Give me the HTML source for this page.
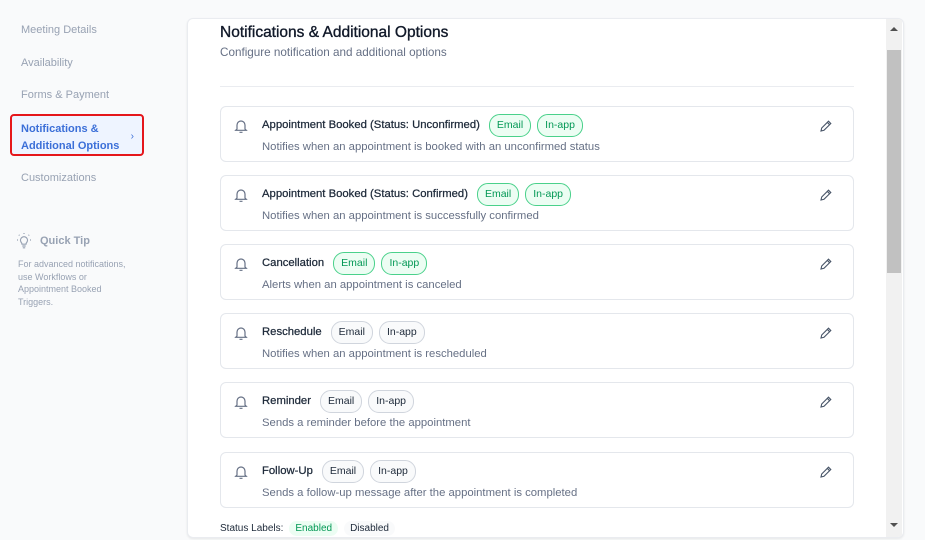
<!DOCTYPE html>
<html><head><meta charset="utf-8"><style>
*{box-sizing:border-box;margin:0;padding:0}
body{width:925px;height:540px;overflow:hidden;background:#f9fafb;font-family:"Liberation Sans",sans-serif;position:relative}
.nav{position:absolute;left:14px;width:128px;font-size:11px;color:#98a2b3;padding:0 7px;border-radius:4px}
.nav.active{left:10px;width:134px;height:42px;border:2px solid #e5161b;background:#eef4ff;color:#3b6fd8;font-weight:bold;padding:5px 9px;line-height:17px}
.panel{position:absolute;left:187px;top:18px;width:717px;height:520px;background:#fff;border:1px solid #eaecf0;border-radius:6px;overflow:hidden;box-shadow:0 1px 2px rgba(0,0,0,.08)}
.sb{position:absolute;right:1px;top:0;width:16px;height:100%;background:#f1f1f1}
.thumb{position:absolute;left:1px;top:31px;width:14px;height:223px;background:#c1c1c1}
h1{position:absolute;left:32px;top:5px;font-size:15.5px;color:#101828;font-weight:normal;-webkit-text-stroke:.35px #101828}
.sub{position:absolute;left:32px;top:27px;font-size:11.7px;color:#667085}
.hr{position:absolute;left:32px;top:67px;width:634px;height:1px;background:#eaecf0}
.card{position:absolute;left:32px;width:634px;height:56px;border:1px solid #e4e7ec;border-radius:6px}
.bell{position:absolute;left:13px;top:11px}
.pen{position:absolute;right:20px;top:12px}
.t{position:absolute;left:41px;top:7px;font-size:11.3px;color:#1d2939;display:flex;align-items:center;gap:6px;height:22px}
.t b{font-weight:normal;-webkit-text-stroke:.25px #1d2939;margin-right:3px}
.pill{border:1px solid #d0d5dd;border-radius:11px;padding:0 7px;height:23px;line-height:21px;font-size:10.5px;background:#f9fafb}
.g .pill{border-color:#4ad18b;background:#ecfdf3;color:#039855}
.d{position:absolute;left:41px;top:34px;font-size:11.3px;color:#667085}
</style></head><body>
<div class="nav" style="top:24px">Meeting Details</div>
<div class="nav" style="top:57px">Availability</div>
<div class="nav" style="top:89px">Forms &amp; Payment</div>
<div class="nav active" style="top:114px">Notifications &amp;<br>Additional Options<span style="position:absolute;right:8px;top:12px;font-weight:normal;font-size:10px">›</span></div>
<div class="nav" style="top:172px">Customizations</div>
<svg style="position:absolute;left:15px;top:232px" width="18" height="18" viewBox="0 0 18 18" fill="none" stroke="#98a2b3" stroke-width="1.2"><path d="M6 10a3.5 3.5 0 1 1 6 0c-.7.8-1 1.4-1 2.2H7c0-.8-.3-1.4-1-2.2zM7.3 14h3.4M7.8 15.8h2.4M9 2V1M3 8H2M16 8h-1M4.5 3.5l-.7-.7M13.5 3.5l.7-.7"/></svg>
<div style="position:absolute;left:40px;top:235px;font-size:11px;color:#98a2b3;font-weight:bold">Quick Tip</div>
<div style="position:absolute;left:18px;top:258px;width:120px;font-size:9px;line-height:12.6px;color:#98a2b3">For advanced notifications, use Workflows or Appointment Booked Triggers.</div>
<div class="panel">
<h1>Notifications &amp; Additional Options</h1>
<div class="sub">Configure notification and additional options</div>
<div class="hr"></div>

<div class="card g" style="top:87px"><svg class="bell" width="14" height="16" viewBox="0 0 14 16" fill="none" stroke="#667085" stroke-width="1.2"><path d="M3 11V7a4 4 0 0 1 8 0v4l1.3 1.3H1.7zM5.5 14.3h3"/></svg><div class="t"><b>Appointment Booked (Status: Unconfirmed)</b><span class="pill">Email</span><span class="pill">In-app</span></div><div class="d">Notifies when an appointment is booked with an unconfirmed status</div><svg class="pen" width="14" height="14" viewBox="0 0 14 14" fill="none" stroke="#475467" stroke-width="1.1"><path d="M2 12l.7-3L9.5 2.2l2.3 2.3L5 11.3zM8.3 3.4l2.3 2.3"/></svg></div>

<div class="card g" style="top:156px"><svg class="bell" width="14" height="16" viewBox="0 0 14 16" fill="none" stroke="#667085" stroke-width="1.2"><path d="M3 11V7a4 4 0 0 1 8 0v4l1.3 1.3H1.7zM5.5 14.3h3"/></svg><div class="t"><b>Appointment Booked (Status: Confirmed)</b><span class="pill">Email</span><span class="pill">In-app</span></div><div class="d">Notifies when an appointment is successfully confirmed</div><svg class="pen" width="14" height="14" viewBox="0 0 14 14" fill="none" stroke="#475467" stroke-width="1.1"><path d="M2 12l.7-3L9.5 2.2l2.3 2.3L5 11.3zM8.3 3.4l2.3 2.3"/></svg></div>

<div class="card g" style="top:225px"><svg class="bell" width="14" height="16" viewBox="0 0 14 16" fill="none" stroke="#667085" stroke-width="1.2"><path d="M3 11V7a4 4 0 0 1 8 0v4l1.3 1.3H1.7zM5.5 14.3h3"/></svg><div class="t"><b>Cancellation</b><span class="pill">Email</span><span class="pill">In-app</span></div><div class="d">Alerts when an appointment is canceled</div><svg class="pen" width="14" height="14" viewBox="0 0 14 14" fill="none" stroke="#475467" stroke-width="1.1"><path d="M2 12l.7-3L9.5 2.2l2.3 2.3L5 11.3zM8.3 3.4l2.3 2.3"/></svg></div>

<div class="card" style="top:294px"><svg class="bell" width="14" height="16" viewBox="0 0 14 16" fill="none" stroke="#667085" stroke-width="1.2"><path d="M3 11V7a4 4 0 0 1 8 0v4l1.3 1.3H1.7zM5.5 14.3h3"/></svg><div class="t"><b>Reschedule</b><span class="pill">Email</span><span class="pill">In-app</span></div><div class="d">Notifies when an appointment is rescheduled</div><svg class="pen" width="14" height="14" viewBox="0 0 14 14" fill="none" stroke="#475467" stroke-width="1.1"><path d="M2 12l.7-3L9.5 2.2l2.3 2.3L5 11.3zM8.3 3.4l2.3 2.3"/></svg></div>

<div class="card" style="top:363px"><svg class="bell" width="14" height="16" viewBox="0 0 14 16" fill="none" stroke="#667085" stroke-width="1.2"><path d="M3 11V7a4 4 0 0 1 8 0v4l1.3 1.3H1.7zM5.5 14.3h3"/></svg><div class="t"><b>Reminder</b><span class="pill">Email</span><span class="pill">In-app</span></div><div class="d">Sends a reminder before the appointment</div><svg class="pen" width="14" height="14" viewBox="0 0 14 14" fill="none" stroke="#475467" stroke-width="1.1"><path d="M2 12l.7-3L9.5 2.2l2.3 2.3L5 11.3zM8.3 3.4l2.3 2.3"/></svg></div>

<div class="card" style="top:433px"><svg class="bell" width="14" height="16" viewBox="0 0 14 16" fill="none" stroke="#667085" stroke-width="1.2"><path d="M3 11V7a4 4 0 0 1 8 0v4l1.3 1.3H1.7zM5.5 14.3h3"/></svg><div class="t"><b>Follow-Up</b><span class="pill">Email</span><span class="pill">In-app</span></div><div class="d">Sends a follow-up message after the appointment is completed</div><svg class="pen" width="14" height="14" viewBox="0 0 14 14" fill="none" stroke="#475467" stroke-width="1.1"><path d="M2 12l.7-3L9.5 2.2l2.3 2.3L5 11.3zM8.3 3.4l2.3 2.3"/></svg></div>

<div style="position:absolute;left:32px;top:502px;font-size:10px;color:#1d2939;display:flex;gap:6px;align-items:center">Status Labels: <span style="background:#ecfdf3;color:#039855;padding:2px 6px;border-radius:8px">Enabled</span><span style="background:#f9fafb;padding:2px 6px;border-radius:8px">Disabled</span></div>

<div class="sb"><div class="thumb"></div>
<div style="position:absolute;left:4px;top:8px;border-left:4px solid transparent;border-right:4px solid transparent;border-bottom:4px solid #505050"></div>
<div style="position:absolute;left:4px;top:504px;border-left:4px solid transparent;border-right:4px solid transparent;border-top:4px solid #505050"></div></div>
</div>
</body></html>
